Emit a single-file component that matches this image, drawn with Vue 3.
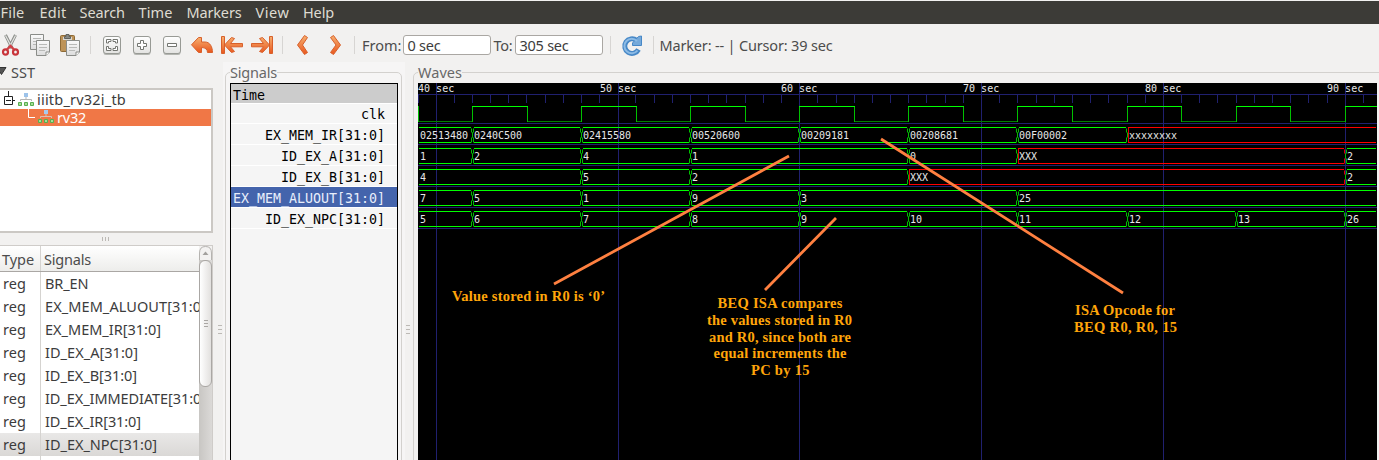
<script setup>
const vFit = {
  mounted(el, binding) {
    const natural = el.getBoundingClientRect().width
    const count = el.textContent.length
    el.style.letterSpacing = `${(binding.value - natural) / count}px`
  }
}

const menus = [
  { t: 'File', w: 24 }, { t: 'Edit', w: 27 }, { t: 'Search', w: 45.5 }, { t: 'Time', w: 34 },
  { t: 'Markers', w: 55 }, { t: 'View', w: 34 }, { t: 'Help', w: 31 }
]

const regs = [
  { t: 'BR_EN', w: 43.5 }, { t: 'EX_MEM_ALUOUT[31:0]', w: 161 }, { t: 'EX_MEM_IR[31:0]', w: 116 },
  { t: 'ID_EX_A[31:0]', w: 93 }, { t: 'ID_EX_B[31:0]', w: 92 }, { t: 'ID_EX_IMMEDIATE[31:0]', w: 161 },
  { t: 'ID_EX_IR[31:0]', w: 96 }, { t: 'ID_EX_NPC[31:0]', w: 112, sel: true }
]

const names = ['clk', 'EX_MEM_IR[31:0]', 'ID_EX_A[31:0]', 'ID_EX_B[31:0]', 'EX_MEM_ALUOUT[31:0]', 'ID_EX_NPC[31:0]']

const START = 39
const X = (t, bias = 0) => Math.floor(54.27 + bias + (t - 42) * 18.1875) + 0.5
const XF = (t) => X(t, 0.25)
const majors = [40, 50, 60, 70, 80, 90]
const ticks = [0.5]
for (let t = 41; t <= 91; t++) if (t % 10) ticks.push(X(t))

const highs = []
const lows = [[0, X(42)]]
const edges = [0.5]
for (let t = 42; t <= 90; t += 6) {
  highs.push([X(t) - 0.5, Math.min(XF(t + 3) + 0.5, 959)])
  edges.push(X(t))
  if (t < 90) {
    edges.push(XF(t + 3))
    lows.push([XF(t + 3), X(t + 6)])
  }
}

const buses = [
  [[START, '02513480'], [42, '0240C500'], [48, '02415580'], [54, '00520600'], [60, '00209181'], [66, '00208681'], [72, '00F00002'], [78, 'xxxxxxxx', 1]],
  [[START, '1'], [42, '2'], [48, '4'], [54, '1'], [66, '0'], [72, 'XXX', 1], [90, '2']],
  [[START, '4'], [48, '5'], [54, '2'], [66, 'XXX', 1], [90, '2']],
  [[START, '7'], [42, '5'], [48, '1'], [54, '9'], [60, '3'], [72, '25']],
  [[START, '5'], [42, '6'], [48, '7'], [54, '8'], [60, '9'], [66, '10'], [72, '11'], [78, '12'], [84, '13'], [90, '26']]
]

const segments = buses.flatMap((bus, row) => bus.map(([t, label, bad], i) => {
  const next = bus[i + 1]
  const first = i === 0
  const x1 = first ? 1 : X(t) + (bad ? 0.5 : 1.5)
  const x2 = next ? X(next[0]) - 1.5 : 958
  const y = 44.5 + row * 21
  const d = `M${x1} ${y}H${x2}M${x1} ${y + 15}H${x2}`
  let side = ''
  if (!first) {
    const a = X(t) + 1
    side += bad
      ? `M${a} ${y}V${y + 15}`
      : `M${a} ${y + 1}V${y + 5}M${a - 1} ${y + 5}V${y + 10}M${a} ${y + 10}V${y + 15}`
  }
  if (next) {
    const b = X(next[0]) - 1
    side += `M${b} ${y + 1}V${y + 5}M${b + 1} ${y + 5}V${y + 10}M${b} ${y + 10}V${y + 15}`
  }
  return { d, side, label, bad, tx: first ? 2 : X(t) + 1.5, ty: y + 11.5 }
}))

const notes = [
  { t: 'Value stored in R0 is ‘0’', x: 34, y: 218, w: 153 },
  { t: 'BEQ ISA compares', x: 299.5, y: 225, w: 125 },
  { t: 'the values stored in R0', x: 289, y: 242, w: 145 },
  { t: 'and R0, since both are', x: 291, y: 259, w: 142 },
  { t: 'equal increments the', x: 295.5, y: 275, w: 133 },
  { t: 'PC by 15', x: 333, y: 292, w: 58.5 },
  { t: 'ISA Opcode for', x: 657, y: 232, w: 100 },
  { t: 'BEQ R0, R0, 15', x: 656, y: 249, w: 103 }
]
</script>

<template>
  <div class="window">
    <nav class="menubar">
      <div v-for="m in menus" :key="m.t"><span v-fit="m.w">{{ m.t }}</span></div>
    </nav>

    <div class="toolbar">
      <svg class="icons" width="350" height="38" viewBox="0 24 350 38">
        <defs>
          <linearGradient id="or" x1="0" y1="0" x2="0" y2="1"><stop offset="0" stop-color="#f6b070" /><stop offset="1" stop-color="#e9561d" /></linearGradient>
          <linearGradient id="pg" x1="0" y1="0" x2="0" y2="1"><stop offset="0" stop-color="#fafafa" /><stop offset="1" stop-color="#dcdcdc" /></linearGradient>
          <linearGradient id="bt" x1="0" y1="0" x2="0" y2="1"><stop offset="0" stop-color="#fff" /><stop offset="1" stop-color="#e3e3e1" /></linearGradient>
        </defs>
        <g fill="none">
          <path d="M5.5 35L12 48M15.5 35L9 48" stroke="#8b8d89" stroke-width="3" />
          <path d="M5.5 35.5L11.5 47M15.5 35.5L9.5 47" stroke="#e4e5e2" stroke-width="1.2" />
          <ellipse cx="5.5" cy="52" rx="2.5" ry="2.7" stroke="#c9353b" stroke-width="2.2" />
          <ellipse cx="15.5" cy="52" rx="2.5" ry="2.7" stroke="#c9353b" stroke-width="2.2" />
          <path d="M7 49.5L10.5 46L14 49.5" stroke="#cf4146" stroke-width="2.4" />
        </g>
        <g fill="url(#pg)" stroke="#8a8c88">
          <path d="M30.5 34.5H43.5V49.5H30.5Z" /><path d="M33 38.5H41M33 41.5H39M33 44.5H36" stroke="#b5b6b4" />
          <path d="M36.5 40.5H49.5V52L46 55.5H36.5Z" /><path d="M39 44.5H47M39 47.5H47M39 50.5H45" stroke="#b9bab8" />
          <path d="M46 55.5V52H49.5" fill="#fff" />
        </g>
        <g>
          <rect x="60.5" y="35.5" width="14" height="16" rx="1" fill="#bd9358" stroke="#8e6a36" />
          <rect x="63" y="37" width="9" height="3" fill="#d9d6cf" /><path d="M64.5 38.5V36.5H66V34.5H69V36.5H70.5V38.5Z" fill="#888a85" stroke="#61635f" />
          <path d="M66.5 40.5H79.5V52L76 55.5H66.5Z" fill="url(#pg)" stroke="#8a8c88" />
          <path d="M69 44.5H77M69 47.5H77M69 50.5H75" stroke="#b9bab8" /><path d="M76 55.5V52H79.5" fill="#fff" stroke="#8a8c88" />
        </g>
        <path d="M90.5 36V54M282.5 36V54" stroke="#d7d5d3" />
        <g v-for="x in [103, 133, 163]" :key="x">
          <rect :x="x + 0.5" y="37" width="17" height="18" rx="2.5" fill="#b4b6b1" />
          <rect :x="x + 0.5" y="36.5" width="17" height="17" rx="2.5" fill="url(#bt)" stroke="#989a95" />
        </g>
        <g fill="#fff" stroke="#747671">
          <path d="M106.5 43V39.5H111V41.5H108.5V43ZM117.5 43V39.5H113V41.5H115.5V43ZM106.5 46.5V50.5H111V48.5H108.5V46.5ZM117.5 46.5V50.5H113V48.5H115.5V46.5Z" />
          <path d="M140.5 40.5H143.5V43.5H146.5V46.5H143.5V49.5H140.5V46.5H137.5V43.5H140.5Z" />
          <path d="M167.5 43.5H176.5V46.5H167.5Z" />
        </g>
        <g fill="url(#or)" stroke="#d8602b" stroke-linejoin="round">
          <path d="M191.5 44.8L198.500 37.5H201.500V42H205C210 42 212.500 47 212.500 52.500H207.500C207.500 49.500 205.500 47.500 201.500 47.500V52.500H198.500Z" />
          <path d="M221.5 36.5H224.5V53.5H221.5ZM224.5 45L231.5 37.5L234.5 38.5L230.5 43.5H242.5V46.8H230.5L234.500 51.5L231.5 52.5Z" />
          <path d="M272.5 36.5H269.5V53.5H272.5ZM269.5 45L262.5 37.5L259.5 38.5L263.5 43.5H251.5V46.800H263.5L259.500 51.5L262.5 52.5Z" />
          <path d="M304.5 35.5L307.5 37.5L302.5 45L307.5 52.5L304.5 54.5L297.5 45Z" />
          <path d="M333.5 35.5L330.5 37.5L336 45L330.5 52.5L333.5 54.5L340.500 45Z" />
        </g>
      </svg>
      <i class="sep s1"></i>
      <span v-fit="39.5" class="lbl">From:</span>
      <div class="entry"><span v-fit="33">0 sec</span></div>
      <span v-fit="19" class="lbl to">To:</span>
      <div class="entry"><span v-fit="49">305 sec</span></div>
      <i class="sep s2"></i>
      <svg class="reload" width="22" height="22" viewBox="0 0 22 22">
        <path d="M17.5 14.5A7.3 7.3 0 1 1 15.5 5.3" fill="none" stroke="#4788c7" stroke-width="5" />
        <path d="M20.5 1V10.5H11.5V8L17.5 1.5Z" fill="#75a9da" stroke="#4788c7" />
        <path d="M16.5 15.5A7.3 7.3 0 1 1 16 6" fill="none" stroke="#8dbbe5" stroke-width="2" />
      </svg>
      <i class="sep s3"></i>
      <span v-fit="173" class="lbl status">Marker: -- | Cursor: 39 sec</span>
    </div>

    <main class="body">
      <section class="side">
        <div class="sst">
          <svg width="7" height="8" viewBox="0 0 7 8"><path d="M-3 .5H6L1.5 7.5Z" fill="#555" stroke="#333" /></svg>
          <span v-fit="24">SST</span>
        </div>
        <div class="tree">
          <div class="node root">
            <svg width="34" height="19" viewBox="0 0 34 19">
              <path d="M8.5 0V5M13 9.5H15M4.5 5.5H12.5V13.5H4.5ZM6 9.5H11" fill="none" stroke="#222" />
              <g transform="translate(18 2)"><path d="M8 4V6.5M2.5 8V6.5H13.5V8" fill="none" stroke="#b5b5b5" /><rect x="6" y="0" width="4" height="4" fill="#9dc3ea" /><path d="M.5 9.5h3v3h-3zM6.5 9.5h3v3h-3zM12.5 9.5h3v3h-3z" fill="#a5dc96" stroke="#59ae50" /></g>
            </svg>
            <span v-fit="89">iiitb_rv32i_tb</span>
          </div>
          <div class="node active">
            <svg width="54" height="17" viewBox="0 0 54 17">
              <path d="M28.5 0V8.5H35" fill="none" stroke="#fff" />
              <g transform="translate(38 1)"><path d="M8 4V6.5M2.5 8V6.5H13.5V8" fill="none" stroke="#d9c0b4" /><rect x="6" y="0" width="4" height="4" fill="#a9c9ec" /><path d="M.5 9.5h3v3h-3zM6.5 9.5h3v3h-3zM12.5 9.5h3v3h-3z" fill="#a5dc96" stroke="#59ae50" /></g>
            </svg>
            <span v-fit="29">rv32</span>
          </div>
        </div>
        <div class="grip"><i></i><i></i><i></i></div>
        <div class="list">
          <div class="rows">
            <div class="row head"><div class="c1"><span v-fit="32">Type</span></div><div class="c2"><span v-fit="47">Signals</span></div></div>
            <div v-for="r in regs" :key="r.t" class="row" :class="{ sel: r.sel }">
              <div class="c1"><span v-fit="23">reg</span></div><div class="c2"><span v-fit="r.w">{{ r.t }}</span></div>
            </div>
            <div class="row"><div class="c1"></div><div class="c2"></div></div>
          </div>
          <div class="scroll">
            <svg width="13" height="14" viewBox="0 0 13 14"><path d="M.5 14V7Q.5 .5 6.5 .5Q12.5 .5 12.5 7V14" fill="#f3f2f1" stroke="#b5b3b0" /><path d="M3.5 9L6.5 5.5L9.5 9Z" fill="#a3a19e" /></svg>
            <div class="thumb"><i></i><i></i><i></i></div>
          </div>
        </div>
      </section>

      <div class="split"><i></i><i></i><i></i></div>

      <section class="signals">
        <fieldset class="frame">
          <legend><span v-fit="47">Signals</span></legend>
          <div class="names">
            <div class="name time">Time</div>
            <div v-for="n in names" :key="n" class="name" :class="{ clk: n === 'clk', hot: n === 'EX_MEM_ALUOUT[31:0]' }">{{ n }}</div>
          </div>
        </fieldset>
      </section>

      <div class="split mid"><i></i><i></i><i></i></div>

      <section class="waves">
        <fieldset class="frame wide">
          <legend><span v-fit="44">Waves</span></legend>
          <svg class="plot" width="959" height="377" viewBox="0 0 959 377">
            <rect width="959" height="377" fill="#000" />
            <g stroke="#20206f">
              <path v-for="t in majors" :key="t" :d="`M${XF(t)} 0V377`" />
              <path v-for="x in ticks" :key="x" :d="`M${x} 11V20`" />
              <path d="M0 11.5H959" />
              <path v-for="i in 6" :key="i" :d="`M0 ${19.5 + i * 21}H959`" />
            </g>
            <g class="mono">
              <text v-for="t in majors" :key="t" :x="XF(t) - 18.5" y="9.3" textLength="36.2">{{ t }} sec</text>
            </g>
            <path v-for="l in lows" :key="l[0]" :d="`M${l[0]} 38.5H${l[1]}`" stroke="#008000" />
            <path v-for="e in edges" :key="e" :d="`M${e} 23V39`" stroke="#00c000" />
            <path v-for="h in highs" :key="h[0]" :d="`M${h[0]} 23.5H${h[1]}`" stroke="#00ff00" />
            <g v-for="(s, i) in segments" :key="i" fill="none">
              <path :d="s.side" :stroke="s.bad ? '#e00000' : '#00c000'" />
              <path :d="s.d" :stroke="s.bad ? '#ff0000' : '#00ff00'" />
              <text class="mono" :x="s.tx" :y="s.ty" :textLength="s.label.length * 6">{{ s.label }}</text>
            </g>
            <path d="M136 201L371 73M347 207L418 135M463 56L705 210" fill="none" stroke="#ff8040" stroke-width="2.8" />
            <text v-for="n in notes" :key="n.t" class="note" :x="n.x" :y="n.y" :textLength="n.w">{{ n.t }}</text>
          </svg>
        </fieldset>
      </section>
    </main>
  </div>
</template>

<style>
body { overflow: hidden; }
</style>

<style scoped>
* { box-sizing: border-box; }
.window { width: 1379px; height: 460px; overflow: hidden; background: #f2f1f0; color: #4c4c4c; font: 14.5px/20px "Noto Sans", "Open Sans", sans-serif; display: flex; flex-direction: column; white-space: nowrap; }
.menubar { height: 24px; flex: none; border-top: 1px solid #f2f1f0; background: #3c3b37; color: #dfdbd2; display: grid; grid-template-columns: 39px 40px 59px 48px 69px 47.5px 50px; padding: 1px 0 0 .5px; }
span { display: inline-block; }
.toolbar { height: 38px; flex: none; display: flex; align-items: flex-start; }
.icons { flex: none; }
.toolbar .lbl { margin-top: 11px; }
.sep { width: 1px; height: 18px; margin-top: 12px; background: #d7d5d3; }
.s1 { margin: 12px 7px 0 4px; }
.entry { width: 88px; height: 20px; margin: 11px 3px 0 1px; border: 1px solid #aaa7a3; border-radius: 3px; background: #fff; padding-left: 4px; color: #3c3c3c; line-height: 18px; }
.entry span { margin-top: -1px; }
.to { margin-right: 1px; }
.s2 { margin-left: 4px; }
.reload { margin: 11px 10px 0 10px; }
.s3 { margin-right: 6px; }
.body { flex: 1; display: flex; min-height: 0; }
.side { width: 213px; flex: none; display: flex; flex-direction: column; }
.sst { height: 25px; display: flex; align-items: flex-start; gap: 4px; }
.sst svg { margin-top: 5px; }
.tree { height: 145px; flex: none; border-top: 2px solid #cbc8c4; border-right: 2px solid #cbc8c4; border-bottom: 2px solid #cbc8c4; background: #fff; padding-top: 1px; margin-top: 1px; color: #3c3c3c; }
.node { display: flex; gap: 3px; line-height: 17px; }
.root { height: 18px; }
.active { height: 17px; background: #f07746; color: #fff; line-height: 16px; }
.grip { height: 12px; display: flex; gap: 2px; justify-content: center; padding: 4px 2px 0 0; }
.grip i { width: 1px; height: 4px; background: #bcb9b5; }
.list { flex: 1; display: flex; border-top: 1px solid #cfccc9; border-right: 1px solid #cfccc9; background: #fff; min-height: 0; }
.rows { width: 199px; overflow: hidden; flex: none; }
.row { display: flex; height: 23px; color: #3c3c3c; line-height: 23px; }
.head { height: 26px; background: linear-gradient(#fff, #ededeb); border-bottom: 1px solid #aaa7a4; color: #4c4c4c; line-height: 27px; }
.c1 { width: 41px; flex: none; border-right: 1px solid #d5d3d0; padding-left: 3px; }
.head .c1 { padding-left: 2px; }
.c2 { flex: 1; padding-left: 4px; overflow: hidden; }
.head .c2 { padding-left: 3px; }
.sel { background: linear-gradient(#e9e8e7, #dad8d6); }
.scroll { width: 13px; background: linear-gradient(90deg, #c8c6c3, #dbd9d7); display: flex; flex-direction: column; }
.scroll svg { flex: none; background: #f2f1f0; }
.thumb { height: 127px; border: 1px solid #aaa7a4; border-radius: 6px; background: linear-gradient(90deg, #fff, #e2e0de); display: flex; flex-direction: column; align-items: center; justify-content: center; gap: 2px; }
.thumb i { width: 4px; height: 1px; background: #aaa7a4; }
.split { width: 10px; flex: none; display: flex; flex-direction: column; align-items: center; gap: 3px; padding: 265px 0 0 4px; }
.split i { width: 4px; height: 1px; background: #bcb9b5; flex: none; }
.signals { width: 182px; flex: none; background: #f6f5f5; padding: 0 3px 0 2px; }
.mid { width: 8px; padding-left: 0; padding-right: 2px; }
.frame { height: 500px; margin: 0; min-width: 0; border: 1px solid #d3d1ce; border-radius: 5px; padding: 0 0 0 4px; }
legend { height: 21px; line-height: 21px; padding: 0; color: #686868; }
.names { width: 168px; height: 440px; border: 1px solid #000; background: #f5f5f5; font: 13.3px/21px "DejaVu Sans Mono", monospace; color: #000; text-align: right; }
.name { height: 21px; border-bottom: 1px solid #fff; padding: 1px 12px 0 2px; }
.name.time { height: 20px; text-align: left; background: #ccc; line-height: 22px; }
.name.clk { height: 20px; line-height: 20px; }
.hot { background: #4464ac; color: #e8eefb; }
.waves { flex: 1; min-width: 0; }
.wide { width: 1000px; }
.plot { display: block; }
.mono { font: 10px "DejaVu Sans Mono", monospace; fill: #e8e8e8; }
.note { font: bold 14.5px "Liberation Serif", serif; fill: #ffa50a; }
.split { padding-top: 263px; }
</style>
